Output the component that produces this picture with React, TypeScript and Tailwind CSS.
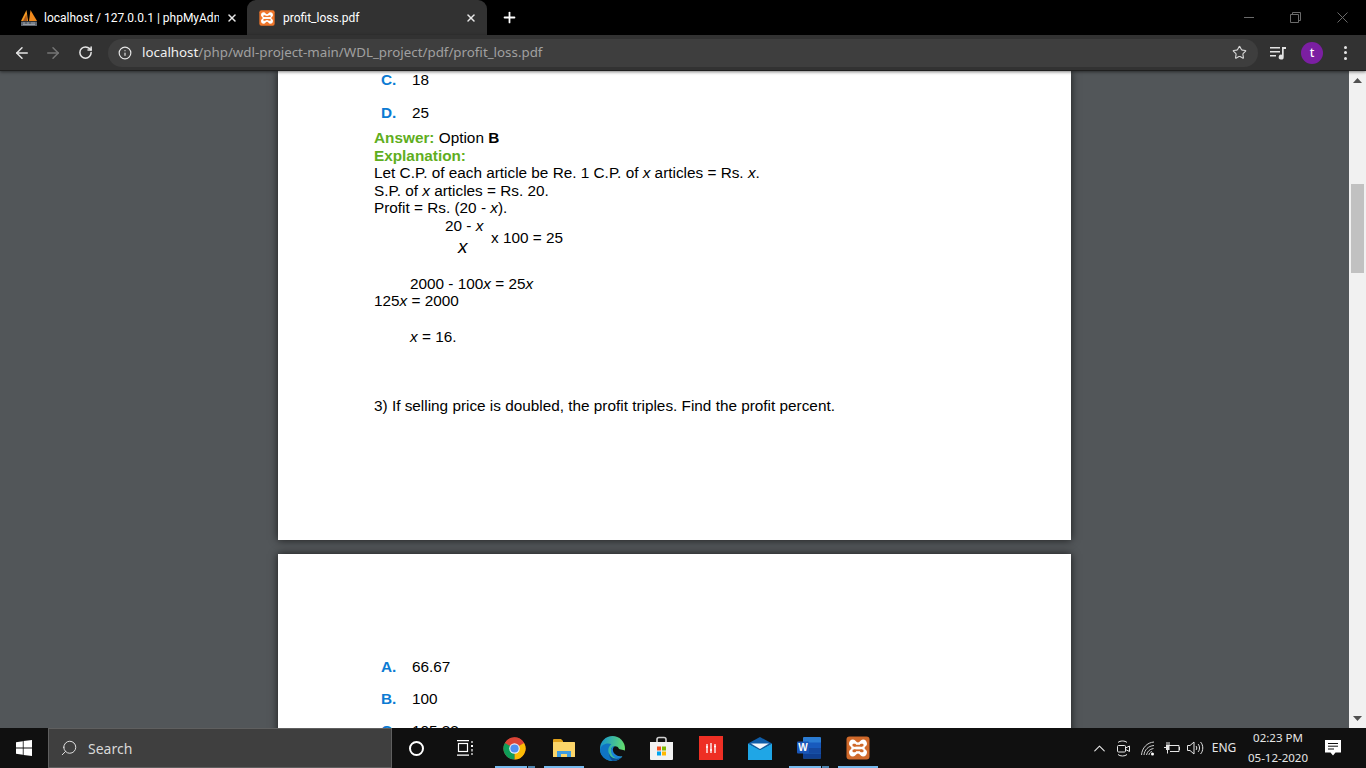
import React from 'react';
import { ArrowLeft, ArrowRight, RotateCw, Info, Star, X, Plus, ChevronUp, Search } from 'lucide-react';

const ui = { fontFamily: '"Noto Sans", "Open Sans", sans-serif' };

const Xampp: React.FC<{ size: number; bg?: string }> = ({ size, bg = '#f0762a' }) => (
  <svg width={size} height={size} viewBox="0 0 24 24">
    <rect x="0.5" y="0.5" width="23" height="23" rx="3" fill={bg} />
    <path
      d="M7 3.500C9.500 3.500 10 6.500 12 6.500S14.500 3.500 17 3.500C19.500 3.500 21 5.500 21 8C21 10 18.500 10.500 18.500 12S21 14 21 16C21 18.500 19.500 20.500 17 20.500C14.500 20.500 14 17.500 12 17.500S9.500 20.500 7 20.500C4.500 20.500 3 18.500 3 16C3 14 5.500 13.500 5.500 12S3 10 3 8C3 5.500 4.500 3.500 7 3.500z"
      fill="#fff"
    />
    <rect x="6.500" y="7.800" width="3.500" height="2.800" rx="1" fill={bg} />
    <rect x="14" y="7.800" width="3.500" height="2.800" rx="1" fill={bg} />
    <rect x="8" y="8.800" width="8" height="1.800" fill={bg} />
    <rect x="6.500" y="13.400" width="3.500" height="2.800" rx="1" fill={bg} />
    <rect x="14" y="13.400" width="3.500" height="2.800" rx="1" fill={bg} />
    <rect x="8" y="13.400" width="8" height="1.800" fill={bg} />
  </svg>
);

const PmaLogo = () => (
  <svg width="18" height="18" viewBox="0 0 18 18">
    <path d="M1 12 6.500 1 8 12z" fill="#f59a23" />
    <path d="M9 12 10.500 1 17 12z" fill="#f08a1d" />
    <path d="M3 12 6.500 5 7 12z" fill="#a9561a" />
    <rect x="1" y="12.500" width="16" height="4.500" rx="0.500" fill="#5f6670" />
    <path d="M3 14h2M7 14h2M11 14h4M3 15.500h12" stroke="#a6acb4" strokeWidth="0.800" />
  </svg>
);

const MediaIcon = () => (
  <svg width="16" height="14" viewBox="0 0 16 14" fill="#e3e3e3">
    <rect x="0" y="1" width="10" height="1.500" />
    <rect x="0" y="5" width="10" height="1.500" />
    <rect x="0" y="9" width="6" height="1.500" />
    <path d="M12 1h4v2h-2.300v8a2.500 2.500 0 1 1-1.700-2.300z" />
  </svg>
);

const WinLogo = () => (
  <svg width="16" height="16" viewBox="0 0 16 16" fill="#fff">
    <path d="M0 2.200 6.800 1.200V7.500H0zM7.600 1.100 16 0V7.500H7.600zM0 8.400H6.800V14.800L0 13.800zM7.600 8.400H16V16L7.600 14.900z" />
  </svg>
);

const TaskView = () => (
  <svg width="17" height="16" viewBox="0 0 17 16" fill="none" stroke="#fff" strokeWidth="1.200">
    <rect x="1.500" y="3.500" width="9" height="8" />
    <path d="M0 0.700h12M0 15.200h12M15 1v2M15 9v2.500M15 13v2" />
    <rect x="14" y="5" width="2" height="2" fill="#fff" stroke="none" />
  </svg>
);

const ChromeLogo = () => (
  <svg width="23" height="23" viewBox="0 0 24 24">
    <circle cx="12" cy="12" r="11.500" fill="#db4437" />
    <path d="M12 12 22 6.200A11.500 11.500 0 0 1 12 23.500z" fill="#fbbc05" />
    <path d="M12 12 12 23.500A11.500 11.500 0 0 1 2 6.200z" fill="#0f9d58" />
    <path d="M2 6.200A11.500 11.500 0 0 1 22 6.200H12z" fill="#db4437" />
    <circle cx="12" cy="12" r="5.500" fill="#e8eef8" />
    <circle cx="12" cy="12" r="4.300" fill="#4f8ff0" />
  </svg>
);

const FolderLogo = () => (
  <svg width="22" height="20" viewBox="0 0 22 20">
    <path d="M0 2a1 1 0 0 1 1-1h7l2 2h0v3H0z" fill="#e0a11b" />
    <rect x="0" y="4" width="22" height="15" rx="0.500" fill="#fbd569" />
    <path d="M4 19v-6h14v6h-4v-3H8v3z" fill="#3f9ce0" />
  </svg>
);

const EdgeLogo = () => (
  <svg width="25" height="25" viewBox="0 0 24 24">
    <defs>
      <linearGradient id="edgeTop" x1="0" y1="0.300" x2="1" y2="0.500">
        <stop offset="0" stopColor="#1795cf" />
        <stop offset="1" stopColor="#66e06a" />
      </linearGradient>
    </defs>
    <circle cx="12" cy="12" r="12" fill="url(#edgeTop)" />
    <path d="M0 13C1 8 7 6 11 8C8 10 7 14 9 18C11 22 17 23 21 20C18 23.500 15 24 12 24C5 24 0 19 0 13z" fill="#0f74c4" />
    <path d="M8.500 16C9.500 21 16 23.500 21 20C18 23.500 15 24 12 24C10 22 8.500 19 8.500 16z" fill="#0b4f96" />
    <path d="M11 12C12 9 17 9 18 12C18.500 13.500 24 13 24 14.500V19C18 21.500 12 19 11 14.500z" fill="#101010" />
    <path d="M10.500 14C10.500 11 12 9.500 14 9.500C12.500 11 12 12.500 12.500 14.500C13.500 18 17 20 21.500 19.500C20 21.500 17 22 14.500 21C12 20 10.500 17 10.500 14z" fill="#1a84d8" />
  </svg>
);

const StoreLogo = () => (
  <svg width="23" height="24" viewBox="0 0 23 24">
    <path d="M7 7V3.500A2 2 0 0 1 9 1.500h5a2 2 0 0 1 2 2V7" fill="none" stroke="#cfcfcf" strokeWidth="1.600" />
    <path d="M0 6h23v17a1 1 0 0 1-1 1H1a1 1 0 0 1-1-1z" fill="#f2f2f2" />
    <rect x="7" y="10.500" width="4" height="4" fill="#f25022" />
    <rect x="12" y="10.500" width="4" height="4" fill="#7fba00" />
    <rect x="7" y="15.500" width="4" height="4" fill="#00a4ef" />
    <rect x="12" y="15.500" width="4" height="4" fill="#ffb900" />
  </svg>
);

const RedApp = () => (
  <svg width="24" height="24" viewBox="0 0 24 24">
    <rect width="24" height="24" fill="#ee2f24" />
    <path d="M8 8v9M12 7v10M16 8v9" stroke="#fff" strokeWidth="1.300" />
    <path d="M7 11h2M11 14h2M15 10.500h2" stroke="#fff" strokeWidth="1.300" />
  </svg>
);

const MailLogo = () => (
  <svg width="24" height="23" viewBox="0 0 24 23">
    <path d="M0 6.500 12 0l12 6.500L12 13z" fill="#0f5da8" />
    <path d="M0 6.500V23h24V6.500L12 13z" fill="#1fa6e6" />
    <path d="M3 6.500h18L12 12z" fill="#f4f8fb" />
  </svg>
);

const WordLogo = () => (
  <svg width="24" height="22" viewBox="0 0 24 22">
    <rect x="6" y="0" width="18" height="21.500" rx="1" fill="#2b7cd3" />
    <rect x="6" y="5.500" width="18" height="5.500" fill="#185abd" />
    <rect x="6" y="11" width="18" height="5.500" fill="#1549a0" />
    <rect x="6" y="16.500" width="18" height="5" fill="#103f91" />
    <rect x="0" y="4.500" width="12" height="12" rx="1" fill="#1a56b8" />
    <text x="6" y="14" textAnchor="middle" fontSize="10" fontWeight="700" fill="#fff" fontFamily="Liberation Sans, sans-serif">W</text>
  </svg>
);

const MeetIcon = () => (
  <svg width="16" height="17" viewBox="0 0 16 17" fill="none" stroke="#e6e6e6" strokeWidth="1">
    <path d="M3 2.500C5 .500 10 .500 12 2.500M3 14.500c2 2 7 2 9 0" />
    <rect x="2.500" y="5.500" width="8" height="6.500" rx="1" />
    <path d="M10.500 8 14.500 6v5.500l-4-2" />
  </svg>
);

const WifiIcon = () => (
  <svg width="14" height="15" viewBox="0 0 14 15" fill="none" stroke="#cfcfcf" strokeWidth="1">
    <path d="M.5 14C1 7 6 1.500 13 1M3 14c.500-5 4-9 10-9.500M5.500 14c.500-3 3-6 7-6.500" />
    <path d="M8 14c0-1.500 1-3 3-3.500" />
    <circle cx="11.500" cy="13" r="1.500" fill="#fff" stroke="none" />
  </svg>
);

const BatteryIcon = () => (
  <svg width="16" height="12" viewBox="0 0 16 12" fill="none" stroke="#e6e6e6" strokeWidth="1">
    <path d="M5 3.500h10v6H6" />
    <path d="M15.500 5v3" />
    <rect x="2" y="3" width="3.500" height="5" fill="#e6e6e6" stroke="none" />
    <path d="M3 0v3M5 0v3M3.500 8v3.500M2 5.500H0" />
  </svg>
);

const VolumeIcon = () => (
  <svg width="17" height="14" viewBox="0 0 17 14" fill="none" stroke="#e6e6e6" strokeWidth="1">
    <path d="M.5 4.500h2.500l4-3.500v12l-4-3.500H.5z" />
    <path d="M9 5c1 1 1 3 0 4M11 3c2 2 2 6 0 8M13.500 1c3 3 3 9 0 12" />
  </svg>
);

const NotifIcon = () => (
  <svg width="16" height="16" viewBox="0 0 16 16">
    <path d="M0 0h16v12.500h-5.500L8 15.500l-2.500-3H0z" fill="#fff" />
    <path d="M3 3.500h10M3 6.200h10M3 9h6" stroke="#101010" strokeWidth="1" />
  </svg>
);

const Option: React.FC<{ letter: string; value: string }> = ({ letter, value }) => (
  <div className="flex h-[18px] items-center pl-[7px]">
    <span className="w-[31px] font-bold text-[#0b7bd3]">{letter}</span>
    <span>{value}</span>
  </div>
);

const TaskIcon: React.FC<{ children: React.ReactNode; open?: boolean; split?: boolean }> = ({ children, open, split }) => (
  <div className="relative flex h-full w-[49px] items-center justify-center">
    {children}
    {open && (
      <div className="absolute bottom-0 left-[5px] flex h-[2px] w-[40px]">
        <div className={split ? 'w-[32px] bg-[#76b9ed]' : 'w-[40px] bg-[#76b9ed]'} />
        {split && <div className="ml-px w-[7px] bg-[#4f86b0]" />}
      </div>
    )}
  </div>
);

const App: React.FC = () => {
  return (
    <div className="flex h-[768px] w-[1366px] flex-col overflow-hidden bg-[#525659] text-black" style={ui}>
      {/* tabs */}
      <div className="flex h-[35px] shrink-0 bg-black text-[12px] text-white" style={{ fontFamily: 'Roboto, "Noto Sans", sans-serif' }}>
        <div className="flex w-[247px] items-center pl-[20px] pr-[8px]">
          <PmaLogo />
          <span className="ml-[6px] w-[175px] overflow-hidden whitespace-nowrap">localhost / 127.0.0.1 | phpMyAdm</span>
          <X size={12} strokeWidth={3} className="ml-[7px] text-[#e8e8e8]" />
        </div>
        <div className="flex w-[240px] items-center rounded-t-[9px] bg-[#323232] pl-[12px]">
          <Xampp size={16} />
          <span className="ml-[8px] w-[182px]">profit_loss.pdf</span>
          <X size={12} strokeWidth={3} className="text-[#e8e8e8]" />
        </div>
        <div className="ml-[14px] flex items-center">
          <Plus size={17} strokeWidth={2.500} />
        </div>
        <div className="ml-auto flex items-center gap-[36px] pr-[18px] text-[#6a6a6a]">
          <div className="h-px w-[10px] bg-[#6a6a6a]" />
          <svg width="11" height="11" viewBox="0 0 11 11" fill="none" stroke="#6a6a6a">
            <path d="M2.500 2.500V.5h8v8h-2M.5 2.500h8v8h-8z" />
          </svg>
          <svg width="11" height="11" viewBox="0 0 11 11" stroke="#6a6a6a">
            <path d="M.5.5l10 10M10.500.5l-10 10" />
          </svg>
        </div>
      </div>

      {/* toolbar */}
      <div className="z-10 flex h-[36px] shrink-0 items-center border-b border-[#1f1f1f] bg-[#323232] shadow-[0_1px_3px_rgba(0,0,0,0.5)]">
        <div className="flex w-[108px] items-center text-[#e6e6e6]">
          <ArrowLeft size={18} strokeWidth={2} className="ml-[13px]" />
          <ArrowRight size={18} strokeWidth={2} className="ml-[13px] text-[#767676]" />
          <RotateCw size={15} strokeWidth={2.400} className="ml-[16px]" />
        </div>
        <div className="flex h-[28px] w-[1150px] items-center rounded-full bg-[#3e3e3e] pl-[10px] pr-[10px]">
          <Info size={14} strokeWidth={2} className="text-[#e6e6e6]" />
          <span className="ml-[10px] whitespace-nowrap text-[13.330px] text-[#a0a0a0]">
            <span className="text-[#f0f0f0]">localhost</span>/php/wdl-project-main/WDL_project/pdf/profit_loss.pdf
          </span>
          <Star size={15} strokeWidth={1.800} className="ml-auto mr-[1px] text-[#d6d6d6]" />
        </div>
        <div className="ml-[12px]"><MediaIcon /></div>
        <div className="ml-[15px] flex h-[22px] w-[22px] items-center justify-center rounded-full bg-[#7b1fa2] text-[12px] font-medium text-white">t</div>
        <div className="ml-[21px] flex flex-col gap-[2.500px]">
          <div className="h-[3px] w-[3px] rounded-full bg-[#e6e6e6]" />
          <div className="h-[3px] w-[3px] rounded-full bg-[#e6e6e6]" />
          <div className="h-[3px] w-[3px] rounded-full bg-[#e6e6e6]" />
        </div>
      </div>

      {/* pdf viewer */}
      <div className="flex min-h-0 flex-1">
        <div
          className="flex min-w-0 flex-1 flex-col items-center gap-[14px] overflow-hidden text-[15.330px] leading-[17.500px] text-black"
          style={{ fontFamily: '"Liberation Sans", Arial, sans-serif' }}
        >
          <div className="h-[469px] w-[793px] shrink-0 bg-white pl-[96px] shadow-[0_0_8px_rgba(0,0,0,0.7)]">
            <div className="flex flex-col gap-[15px]">
              <Option letter="C." value="18" />
              <Option letter="D." value="25" />
            </div>
            <div className="mt-[7px]">
              <div>
                <span className="font-bold text-[#5fae1e]">Answer:</span> Option <b>B</b>
              </div>
              <div className="font-bold text-[#5fae1e]">Explanation:</div>
              <div>Let C.P. of each article be Re. 1 C.P. of <i>x</i> articles = Rs. <i>x</i>.</div>
              <div>S.P. of <i>x</i> articles = Rs. 20.</div>
              <div>Profit = Rs. (20 - <i>x</i>).</div>
            </div>
            <div className="ml-[71px] flex items-center">
              <div className="flex w-[46px] flex-col items-start">
                <span className="h-[18px] whitespace-nowrap">20 - <i>x</i></span>
                <i className="h-[24px] pl-[13px] text-[19px] leading-[24px]">x</i>
              </div>
              <span className="pt-[1px]">x 100 = 25</span>
            </div>
            <div className="mt-[16px] pl-[36px]">2000 - 100<i>x</i> = 25<i>x</i></div>
            <div>125<i>x</i> = 2000</div>
            <div className="mt-[18px] pl-[36px]"><i>x</i> = 16.</div>
            <div className="mt-[52px]">3) If selling price is doubled, the profit triples. Find the profit percent.</div>
          </div>
          <div className="h-[200px] w-[793px] shrink-0 bg-white pl-[96px] pt-[104px] shadow-[0_0_8px_rgba(0,0,0,0.7)]">
            <div className="flex flex-col gap-[14px]">
              <Option letter="A." value="66.67" />
              <Option letter="B." value="100" />
              <Option letter="C." value="105.33" />
            </div>
          </div>
        </div>
        <div className="flex w-[17px] shrink-0 flex-col items-center bg-[#f1f1f1]">
          <svg width="9" height="5" viewBox="0 0 9 5" className="mt-[7px]" fill="#505050"><path d="M4.500 0 9 5H0z" /></svg>
          <div className="mt-[101px] h-[89px] w-[13px] bg-[#c1c1c1]" />
          <svg width="9" height="5" viewBox="0 0 9 5" className="mb-[7px] mt-auto" fill="#505050"><path d="M0 0h9L4.500 5z" /></svg>
        </div>
      </div>

      {/* taskbar */}
      <div className="z-10 flex h-[40px] shrink-0 items-center bg-[#101010] text-white">
        <div className="flex h-full w-[48px] items-center justify-center"><WinLogo /></div>
        <div className="flex h-full w-[344px] items-center border border-[#5f5f5f] bg-[#3f3f3f] pl-[11px] text-[14px] text-[#d8d8d8]">
          <Search size={18} strokeWidth={1.300} className="-scale-x-100 text-[#e0e0e0]" />
          <span className="ml-[10px]">Search</span>
        </div>
        <div className="flex h-full w-[48px] items-center justify-center">
          <div className="h-[15px] w-[15px] rounded-full border-2 border-white" />
        </div>
        <div className="flex h-full w-[50px] items-center justify-center"><TaskView /></div>
        <TaskIcon open split><ChromeLogo /></TaskIcon>
        <TaskIcon open><FolderLogo /></TaskIcon>
        <TaskIcon><EdgeLogo /></TaskIcon>
        <TaskIcon><StoreLogo /></TaskIcon>
        <TaskIcon><RedApp /></TaskIcon>
        <TaskIcon><MailLogo /></TaskIcon>
        <TaskIcon open split><WordLogo /></TaskIcon>
        <TaskIcon open><Xampp size={24} bg="#d0692a" /></TaskIcon>
        <div className="ml-auto flex h-full items-center text-[12px] text-[#e6e6e6]">
          <div className="flex w-[24px] justify-center"><ChevronUp size={19} strokeWidth={1.400} /></div>
          <div className="flex w-[24px] justify-center"><MeetIcon /></div>
          <div className="flex w-[25px] justify-center"><WifiIcon /></div>
          <div className="flex w-[24px] justify-center"><BatteryIcon /></div>
          <div className="flex w-[23px] justify-center"><VolumeIcon /></div>
          <div className="w-[34px] text-center">ENG</div>
          <div className="w-[74px] text-center text-[11.500px] leading-[20px]">
            <div>02:23 PM</div>
            <div>05-12-2020</div>
          </div>
          <div className="flex w-[36px] justify-center"><NotifIcon /></div>
          <div className="w-[15px]" />
        </div>
      </div>
    </div>
  );
};

export default App;
